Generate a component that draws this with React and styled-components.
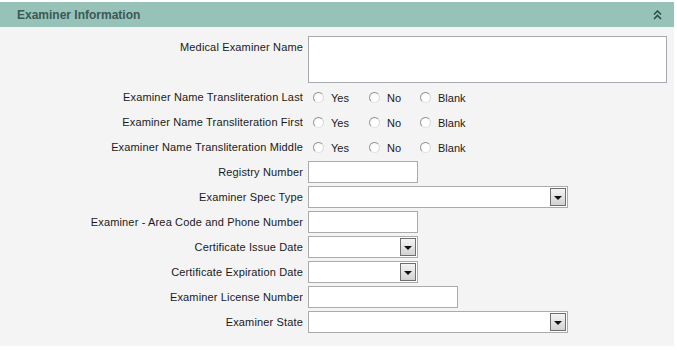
import React from "react";
import styled, { createGlobalStyle } from "styled-components";

const Global = createGlobalStyle`
  html, body { margin: 0; padding: 0; background: #ffffff; }
  body { font-family: "Liberation Sans", Arial, sans-serif; }
`;

const Panel = styled.section`
  width: 674px;
  margin-top: 2px;
  background: #f4f4f4;
`;

const Header = styled.header`
  height: 25px;
  background: #97c2b8;
  display: flex;
  align-items: center;
  justify-content: space-between;
  padding: 0 12px 0 17px;
  box-sizing: border-box;
`;

const Title = styled.h2`
  margin: 0;
  font-size: 12px;
  font-weight: bold;
  color: #3b5955;
  font-family: "Liberation Sans", Arial, sans-serif;
`;

const Body = styled.div`
  display: grid;
  grid-template-columns: 303px 1fr;
  column-gap: 5px;
  row-gap: 3px;
  padding: 9px 0 13px 0;
  align-items: center;
`;

const Label = styled.label`
  text-align: right;
  font-size: 11px;
  letter-spacing: 0.15px;
  color: #1a1a1a;
  white-space: nowrap;
  align-self: ${(p) => (p.$top ? "start" : "center")};
  padding-top: ${(p) => (p.$top ? "5px" : "0")};
`;

const TextArea = styled.div`
  width: 359px;
  height: 47px;
  box-sizing: border-box;
  background: #fff;
  border: 1px solid #a8a8b0;
`;

const TextInput = styled.div`
  width: ${(p) => p.$w}px;
  height: 22px;
  box-sizing: border-box;
  background: #fff;
  border: 1px solid #ababab;
`;

const SelectBox = styled.div`
  width: ${(p) => p.$w}px;
  height: 22px;
  box-sizing: border-box;
  background: #fff;
  border: 1px solid #ababab;
  display: flex;
  justify-content: flex-end;
  align-items: stretch;
  padding: 1px 1px 1px 0;
`;

const DropButton = styled.div`
  width: 16px;
  box-sizing: border-box;
  border: 1px solid #6e6e6e;
  background: linear-gradient(#f4f4f4, #d2d2d2);
  display: flex;
  align-items: center;
  justify-content: center;
  &::after {
    content: "";
    display: block;
    border-left: 4px solid transparent;
    border-right: 4px solid transparent;
    border-top: 4px solid #111;
    margin-top: 1px;
  }
`;

const RadioGroup = styled.div`
  display: flex;
  align-items: center;
  height: 22px;
  box-sizing: border-box;
  padding-left: 5px;
  padding-top: 1px;
`;

const Option = styled.span`
  display: inline-flex;
  align-items: center;
  font-size: 11px;
  color: #1a1a1a;
  margin-right: ${(p) => p.$mr}px;
`;

const RadioCircle = styled.span`
  width: 11px;
  height: 11px;
  border-radius: 50%;
  box-sizing: border-box;
  border: 1px solid;
  border-color: #8e8e8e #d8d8d8 #e4e4e4 #9a9a9a;
  background: radial-gradient(circle at 60% 60%, #ffffff 45%, #ececec 100%);
  margin-right: 7px;
`;

const Chevrons = () => (
  <svg width="9" height="10" viewBox="0 0 9 10">
    <path d="M1 4.5 L4.5 1 L8 4.5" fill="none" stroke="#2f4d48" strokeWidth="1.6" />
    <path d="M1 9 L4.5 5.5 L8 9" fill="none" stroke="#2f4d48" strokeWidth="1.6" />
  </svg>
);

const RadioRow = ({ label }) => (
  <>
    <Label>{label}</Label>
    <RadioGroup>
      <Option $mr={20}><RadioCircle />Yes</Option>
      <Option $mr={19}><RadioCircle />No</Option>
      <Option $mr={0}><RadioCircle />Blank</Option>
    </RadioGroup>
  </>
);

export default function App() {
  return (
    <>
      <Global />
      <Panel>
        <Header>
          <Title>Examiner Information</Title>
          <Chevrons />
        </Header>
        <Body>
          <Label $top>Medical Examiner Name</Label>
          <TextArea />
          <RadioRow label="Examiner Name Transliteration Last" />
          <RadioRow label="Examiner Name Transliteration First" />
          <RadioRow label="Examiner Name Transliteration Middle" />
          <Label>Registry Number</Label>
          <TextInput $w={110} />
          <Label>Examiner Spec Type</Label>
          <SelectBox $w={260}><DropButton /></SelectBox>
          <Label>Examiner - Area Code and Phone Number</Label>
          <TextInput $w={110} />
          <Label>Certificate Issue Date</Label>
          <SelectBox $w={110}><DropButton /></SelectBox>
          <Label>Certificate Expiration Date</Label>
          <SelectBox $w={110}><DropButton /></SelectBox>
          <Label>Examiner License Number</Label>
          <TextInput $w={150} />
          <Label>Examiner State</Label>
          <SelectBox $w={260}><DropButton /></SelectBox>
        </Body>
      </Panel>
    </>
  );
}
